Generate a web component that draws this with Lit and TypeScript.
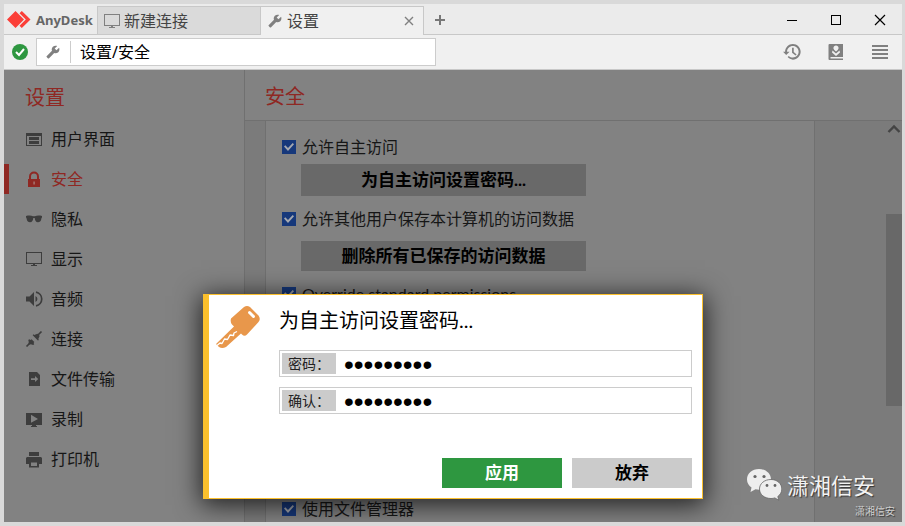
import { LitElement, html, css, svg, nothing } from "lit";
import { customElement, property, state } from "lit/decorators.js";
import { classMap } from "lit/directives/class-map.js";

const wrench = svg`<path transform="translate(15 1) scale(-.59 .59)" d="M22.7 19l-9.1-9.1c.9-2.3.4-5-1.5-6.9-2-2-5-2.4-7.4-1.3L9 6 6 9 1.6 4.7C.4 7.1.9 10.1 2.9 12.1c1.9 1.9 4.6 2.4 6.9 1.5l9.1 9.1c.4.4 1 .4 1.4 0l2.3-2.3c.5-.4.5-1.1.1-1.4z"/>`;

const icons: Record<string, unknown> = {
  wrench,
  screen: svg`<path fill-rule="evenodd" d="M0 1h16v12H0zM1 2v10h14V2z"/><path d="M7 13h2v1h2v1H5v-1h2z"/>`,
  layout: svg`<path fill-rule="evenodd" d="M0 2h16v13H0zM1 5v9h14V5z"/><path d="M3 6h10v3H3zM3 10h10v3H3z"/>`,
  lock: svg`<path d="M2 8h12v8H2z"/><path d="M4 8V5.500a4 4 0 0 1 8 0V8" fill="none" stroke="currentColor" stroke-width="2"/><path d="M7.300 10.500h1.600v3H7.300z" fill="#a5706d"/>`,
  glasses: svg`<path d="M0 5c3-.8 5.500-.5 7 .2h2C10.500 4.500 13 4.200 16 5v1.500c-.6.300-.6 1-.8 2-.4 2-1.500 2.700-3.200 2.700-2.200 0-3-1.700-3.300-4.200H7.300C7 9.500 6.200 11.200 4 11.200c-1.700 0-2.800-.7-3.200-2.700-.2-1-.2-1.700-.8-2z"/>`,
  sound: svg`<path d="M0 5.500h3.500L8 1v14l-4.500-4.500H0z"/><path d="M9.500 5a3.300 3.300 0 0 1 0 6z"/><path d="M10 1.200a6.900 6.900 0 0 1 0 13.600" fill="none" stroke="currentColor" stroke-width="1.700"/>`,
  plug: svg`<path d="M.5 15.500 4 12M12 4 15.500.5" fill="none" stroke="currentColor" stroke-width="1.700"/><path d="M3.200 8.200 4.600 9l1-.7 2.700 2.700-.7 1 .6 1.300-1 .6-2.500-.6-1 .4L2.300 12.300l.5-1-.5-2.300zM7.300 3.300l1 .6 3-1.200.6.2 1.500 1.500.2.600-1.300 3 .6 1-1 .6L6.700 4.200z"/>`,
  file: svg`<path fill-rule="evenodd" d="M3 1h8l3 3v11H3zM5 7.300v1.600h4v2.200l3.200-3L9 5v2.300z"/>`,
  record: svg`<path fill-rule="evenodd" d="M0 2h16v12h-6v1h1v1H5v-1h1v-1H0zM5 3.800v8L12 8z"/>`,
  printer: svg`<path d="M3 1h10v4H3z"/><path fill-rule="evenodd" d="M1 6h14l1 1v6h-3v3.500H3V13H0V7zM5 11.500V15h6v-3.500z"/>`,
  history: svg`<path transform="translate(-1.800 -2) scale(.82)" d="M13 2.500c-5.200 0-9.400 4.100-9.500 9.500H1l3.900 4 4.100-4H5.900c0-3.900 3.200-7 7.100-7s7 3.130 7 7-3.130 7-7 7c-1.930 0-3.680-.79-4.940-2.060l-1.420 1.420C8.270 19.990 10.510 21.500 13 21.500c5.200 0 9.500-4.300 9.500-9.500S18.200 2.500 13 2.500zm-1 4.500v6l4.280 3.500 1.300-1.400-3.500-3V7H12z"/>`,
  book: svg`<path fill-rule="evenodd" d="M1.500 0H15v13H2.500v1.500H15v1.500H1.500Q.5 16 .5 15V1Q.5 0 1.500 0zM8 1.500a2.500 2.500 0 0 0-1.700 4.400L8 7.400l1.700-1.500A2.500 2.500 0 0 0 8 1.500zM4.500 6.500 4 8.500 8 12l4-3.500-.5-2L8 9.500z"/>`,
  menu: svg`<path d="M0 1h16v2H0zM0 5h16v2H0zM0 9h16v2H0zM0 13h16v2H0z"/>`,
  close: svg`<path d="M4 4l8 8M12 4l-8 8" fill="none" stroke="currentColor" stroke-width="1.400"/>`,
  plus: svg`<path d="M7 3h2v4h4v2H9v4H7V9H3V7h4z"/>`,
  winMin: svg`<path d="M3 8h10v1H3z"/>`,
  winMax: svg`<path fill-rule="evenodd" d="M3 3h10v10H3zM4 4v8h8V4z"/>`,
  winClose: svg`<path d="M3 3l10 10M13 3 3 13" fill="none" stroke="currentColor" stroke-width="1.200"/>`,
  ok: svg`<circle cx="8" cy="8" r="8" fill="#2e9740"/><path d="M4 8l3 3 5-6" fill="none" stroke="#fff" stroke-width="2"/>`,
  up: svg`<path d="M2.500 11 8 5.500l5.500 5.500" fill="none" stroke="currentColor" stroke-width="2.400"/>`,
};

@customElement("ad-icon")
class AdIcon extends LitElement {
  @property() name = "";
  static styles = css`
    :host { display: inline-flex; flex: none; }
    svg { display: block; fill: currentColor; overflow: visible; }
  `;
  render() {
    return html`<svg width="16" height="16" viewBox="0 0 16 16" aria-hidden="true">${icons[this.name]}</svg>`;
  }
}

const controls = css`
  * { box-sizing: border-box; }
  button, input { font: inherit; color: inherit; margin: 0; padding: 0; border: 0; background: none; border-radius: 0; outline: none; }
  a { color: inherit; text-decoration: none; }
  h1, h2 { margin: 0; font-weight: 400; }
`;

@customElement("ad-check")
class AdCheck extends LitElement {
  @property() label = "";
  static styles = [controls, css`
    :host { display: block; }
    .row { display: flex; align-items: center; gap: 6px; height: 24px; font: 16px/24px Lato, "Noto Sans CJK SC", sans-serif; }
    .box { appearance: none; width: 14px; height: 14px; background: #16387b; display: grid; place-items: center; }
    .box:checked::before {
      content: ""; width: 10px; height: 8px; background: #a4a8b0;
      clip-path: polygon(0 45%, 13% 28%, 40% 62%, 87% 0, 100% 15%, 40% 100%);
    }
  `];
  render() {
    return html`<label class="row"><input class="box" type="checkbox" checked />${this.label}</label>`;
  }
}

@customElement("ad-password-dialog")
class AdPasswordDialog extends LitElement {
  static styles = [controls, css`
    :host { display: block; }
    .dialog {
      display: grid; grid-template-columns: 63px minmax(0, 1fr);
      padding: 11px 10px 10px 7px;
      background: #fff; color: #000;
      border: 1px solid #fbc02d; border-left-width: 6px;
      box-shadow: 0 4px 24px 2px rgba(0, 0, 0, .75);
    }
    .title { font: 20px/28px Lato, "Noto Sans CJK SC", sans-serif; margin-bottom: 16px; }
    .fields { display: flex; flex-direction: column; gap: 10px; }
    .field { display: flex; height: 27px; padding: 2px; border: 1px solid #ccc; }
    .caption { flex: none; width: 54px; padding-left: 6px; background: #cbcbcb; color: #222; font-size: 14px; line-height: 22px; }
    .secret { flex: 1; min-width: 0; padding: 2px 0 0 8px; font: 28px/22px "Liberation Sans", sans-serif; }
    .actions { display: flex; justify-content: flex-end; gap: 10px; margin-top: 44px; }
    .action { width: 120px; height: 30px; font-size: 17px; line-height: 28px; font-weight: 700; background: #cbcbcb; }
    .primary { background: #2e9740; color: #fff; }
  `];
  private field(id: string, caption: string) {
    return html`<div class="field">
      <label class="caption" for=${id}>${caption}</label>
      <input class="secret" id=${id} type="password" value="anydesk12" />
    </div>`;
  }
  render() {
    return html`<form class="dialog" role="dialog" aria-labelledby="title">
      <svg width="44" height="42" viewBox="0 0 44 42" aria-hidden="true">
        <path fill="#e8974b" d="M28 1Q31-1 34 1l8.500 8.500Q45 13 42.500 16L31 28.500Q28.500 31 26 28.500L25 27.500 10 41Q6 43 3 41L0 38l18-17.500-2-2Q14 16 15 12.500z"/>
        <path d="M33.500 6.500l4 4" stroke="#fff" stroke-width="3" stroke-linecap="round"/>
        <path d="M1 39.500 4 37l2 .5L8.500 33l3 .5L14 29l3.500.5L18 27l3-1.500" fill="none" stroke="#fff" stroke-width="1.300" stroke-linejoin="round"/>
      </svg>
      <div>
        <h2 class="title" id="title">为自主访问设置密码...</h2>
        <div class="fields">${this.field("password", "密码：")}${this.field("confirm", "确认：")}</div>
        <div class="actions">
          <button class="action primary" type="button">应用</button>
          <button class="action" type="button">放弃</button>
        </div>
      </div>
    </form>`;
  }
}

@customElement("app-root")
class AppRoot extends LitElement {
  @state() private section = "安全";

  private sections = [
    ["layout", "用户界面"], ["lock", "安全"], ["glasses", "隐私"],
    ["screen", "显示"], ["sound", "音频"], ["plug", "连接"],
    ["file", "文件传输"], ["record", "录制"], ["printer", "打印机"],
  ];

  static styles = [controls, css`
    :host {
      display: flex; flex-direction: column; box-sizing: border-box; height: 100vh; overflow: hidden;
      border: 4px solid #d9d9d9; border-right-width: 3px; background: #f0f0f0; color: #444;
      font-family: "Noto Sans", "Noto Sans CJK SC", sans-serif; font-size: 16px; line-height: 24px;
    }
    .titlebar { display: flex; flex: none; height: 31px; background: #ebebeb; box-shadow: inset 0 -1px #c8c8c8; }
    .brand { display: flex; align-items: center; gap: 5px; width: 93px; padding-left: 3px; font-size: 13px; font-weight: 700; color: #666; }
    .tab { display: flex; align-items: center; width: 163px; margin: 2px 0 1px; padding: 0 6px; background: #dadada; border: solid #c8c8c8; border-width: 1px 0 0 1px; }
    .tab.open { width: 164px; margin-bottom: 0; background: #f0f0f0; border-right-width: 1px; }
    .tab ad-icon, .tools, .address ad-icon { color: #808080; }
    .name { display: flex; flex: 1; align-items: center; gap: 4px; }
    .shut { display: grid; }
    .add { width: 32px; color: #777; display: grid; place-items: center; }
    .window { display: flex; margin-left: auto; color: #000; }
    .window button { display: grid; place-items: center; width: 44px; }
    .toolbar { display: flex; flex: none; align-items: center; height: 35px; padding-left: 8px; border-bottom: 1px solid #c8c8c8; }
    .address { display: flex; align-items: center; width: 400px; height: 28px; margin-left: 8px; background: #fff; border: 1px solid #ccc; }
    .address ad-icon { width: 34px; height: 22px; align-items: center; padding-left: 8px; box-sizing: border-box; border-right: 1px solid #ccc; }
    .path { flex: 1; min-width: 0; padding-left: 9px; color: #000; }
    .tools { display: flex; margin-left: auto; }
    .tools button { display: grid; place-items: center; width: 44px; height: 32px; }
    .body { position: relative; display: flex; flex: 1; min-height: 0; overflow: hidden; background: #828282; color: #161616; }
    .side { flex: none; width: 241px; padding-top: 14px; border-right: 1px solid #707070; }
    .heading { font-size: 20px; line-height: 28px; color: #8f2823; }
    .side .heading { padding-left: 21px; margin-bottom: 12px; }
    .item { display: flex; align-items: center; gap: 9px; height: 30px; margin-bottom: 10px; padding-left: 22px; }
    .item ad-icon { color: #3d3d3d; }
    .item.current, .item.current ad-icon { color: #8f2823; }
    .item.current { padding-left: 17px; border-left: 5px solid #8f2823; }
    .main { display: flex; flex: 1; flex-direction: column; min-width: 0; }
    .top { flex: none; height: 51px; padding: 13px 20px 0; border-bottom: 1px solid #707070; }
    .view { display: flex; flex: 1; min-height: 0; background: #7b7b7b; }
    .panel { display: flex; flex: 1; flex-direction: column; gap: 11px; margin: 0 71px 0 20px; padding: 14px 16px 0; background: #828282; border: solid #707070; border-width: 0 1px; }
    .group { display: grid; gap: 5px; }
    .group.wide { gap: 10px; }
    .command { width: 285px; height: 32px; margin-left: 19px; background: #696969; color: #000; font: 700 17px/28px Lato, "Noto Sans CJK SC", sans-serif; }
    .wide .command { height: 30px; }
    .permissions { margin-top: 180px; }
    .scroll { display: flex; flex: none; flex-direction: column; width: 16px; color: #444; }
    .thumb { height: 192px; margin-top: 77px; background: #686868; }
    .overlay { position: absolute; top: 224px; left: 0; right: 0; width: 500px; margin: 0 auto; }
    .mark { position: absolute; right: 7px; bottom: 1px; display: grid; justify-items: end; color: #f2f2f2; text-shadow: 1px 1px 1px #333; }
    .account { display: flex; align-items: center; gap: 5px; margin-right: 20px; font-size: 22px; line-height: 32px; }
    .small { font-size: 10px; line-height: 20px; color: #d0d0d0; }
  `];

  private item([icon, label]: string[]) {
    const current = label === this.section;
    return html`<a class=${classMap({ item: true, current })} href="#" aria-current=${current ? "page" : nothing}
      @click=${(e: Event) => { e.preventDefault(); this.section = label; }}><ad-icon name=${icon}></ad-icon>${label}</a>`;
  }

  render() {
    return html`
      <header class="titlebar">
        <div class="brand">
          <svg width="24" height="18" viewBox="0 0 24 18" fill="#fb3f38" aria-hidden="true">
            <path d="M0 8.500 8.500 0 17 8.500 8.500 17zM12.500 2.200 14.800 0l8.700 8.500-8.700 8.500-2.300-2.200 6.300-6.300z"/>
          </svg>
          <span>AnyDesk</span>
        </div>
        <button class="tab"><span class="name"><ad-icon name="screen"></ad-icon>新建连接</span></button>
        <div class="tab open">
          <button class="name"><ad-icon name="wrench"></ad-icon>设置</button>
          <button class="shut" aria-label="关闭标签"><ad-icon name="close"></ad-icon></button>
        </div>
        <button class="add" aria-label="新标签"><ad-icon name="plus"></ad-icon></button>
        <div class="window">
          <button aria-label="最小化"><ad-icon name="winMin"></ad-icon></button>
          <button aria-label="最大化"><ad-icon name="winMax"></ad-icon></button>
          <button aria-label="关闭"><ad-icon name="winClose"></ad-icon></button>
        </div>
      </header>
      <div class="toolbar">
        <ad-icon name="ok"></ad-icon>
        <div class="address">
          <ad-icon name="wrench"></ad-icon>
          <input class="path" aria-label="地址" value="设置/安全" />
        </div>
        <div class="tools">
          <button aria-label="历史"><ad-icon name="history"></ad-icon></button>
          <button aria-label="地址簿"><ad-icon name="book"></ad-icon></button>
          <button aria-label="菜单"><ad-icon name="menu"></ad-icon></button>
        </div>
      </div>
      <div class="body">
        <aside class="side">
          <h1 class="heading">设置</h1>
          <nav>${this.sections.map((s) => this.item(s))}</nav>
        </aside>
        <main class="main">
          <div class="top"><h2 class="heading">${this.section}</h2></div>
          <div class="view">
            <div class="panel">
              <div class="group">
                <ad-check label="允许自主访问"></ad-check>
                <button class="command">为自主访问设置密码...</button>
              </div>
              <div class="group wide">
                <ad-check label="允许其他用户保存本计算机的访问数据"></ad-check>
                <button class="command">删除所有已保存的访问数据</button>
              </div>
              <ad-check label="Override standard permissions"></ad-check>
              <ad-check class="permissions" label="使用文件管理器"></ad-check>
            </div>
            <div class="scroll"><ad-icon name="up"></ad-icon><div class="thumb"></div></div>
          </div>
        </main>
        <ad-password-dialog class="overlay"></ad-password-dialog>
        <div class="mark">
          <div class="account">
            <svg width="36" height="33" viewBox="0 0 36 33" aria-hidden="true">
              <path fill="#eee" d="M13 1C6 1 1 5.500 1 11.500c0 3.500 1.800 6 4.500 8L4.500 24l5-2.700c8 2 15.500-2.800 15.500-9.800C25 5.500 19.500 1 13 1z"/>
              <path fill="#eee" stroke="#666" stroke-width=".8" d="M25 11.500c-6.500 0-11.500 4-11.500 9.500S18.500 30.500 25 30.500c1.500 0 2.700-.2 3.800-.6l4 2.300-1-3.700c2.500-1.800 4-4.300 4-7.500 0-5.500-4.800-9.500-10.800-9.500z"/>
              <g fill="#666"><circle cx="9" cy="8.500" r="1.600"/><circle cx="18" cy="8.500" r="1.600"/><circle cx="21" cy="17.500" r="1.400"/><circle cx="29" cy="17.500" r="1.400"/></g>
            </svg>
            <span>潇湘信安</span>
          </div>
          <span class="small">潇湘信安</span>
        </div>
      </div>`;
  }
}
